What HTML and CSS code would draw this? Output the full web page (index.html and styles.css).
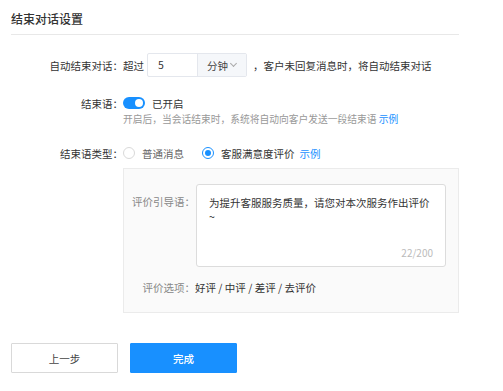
FILE: index.html
```html
<!DOCTYPE html>
<html lang="zh-CN">
<head>
    <meta charset="UTF-8">
    <meta name="viewport" content="width=device-width, initial-scale=1.0">
    <title>结束对话设置</title>
    <link rel="stylesheet" href="styles.css">
</head>
<body>
    <div class="page">
        <h3 class="page-title">结束对话设置</h3>

        <div class="form">
            <div class="form-row">
                <div class="form-label">自动结束对话：</div>
                <div class="form-field">
                    <span>超过</span>
                    <span class="input-group">
                        <span class="input-num">5</span>
                        <span class="input-unit">分钟<span class="chevron"></span></span>
                    </span>
                    <span>，客户未回复消息时，将自动结束对话</span>
                </div>
            </div>

            <div class="form-row row-switch">
                <div class="form-label">结束语：</div>
                <div class="form-field">
                    <span class="switch is-on"><span class="switch-knob"></span></span>
                    <span>已开启</span>
                </div>
            </div>
            <div class="form-hint">
                开启后，当会话结束时，系统将自动向客户发送一段结束语 <a class="link" href="#">示例</a>
            </div>

            <div class="form-row row-type">
                <div class="form-label">结束语类型：</div>
                <div class="form-field">
                    <label class="radio">
                        <span class="radio-dot"></span>
                        <span class="radio-text">普通消息</span>
                    </label>
                    <label class="radio is-checked">
                        <span class="radio-dot"></span>
                        <span class="radio-text">客服满意度评价</span>
                    </label>
                    <a class="link" href="#">示例</a>
                </div>
            </div>

            <div class="eval-box">
                <div class="eval-row">
                    <div class="eval-label">评价引导语：</div>
                    <div class="textarea">
                        <div class="textarea-text">为提升客服服务质量，请您对本次服务作出评价<br>~</div>
                        <div class="textarea-count">22/200</div>
                    </div>
                </div>
                <div class="eval-row eval-options">
                    <div class="eval-label">评价选项：</div>
                    <div class="eval-value">好评 / 中评 / 差评 / 去评价</div>
                </div>
            </div>
        </div>

        <div class="actions">
            <button class="btn">上一步</button>
            <button class="btn btn-primary">完成</button>
        </div>
    </div>
</body>
</html>
```

FILE: styles.css
```css
html,
body {
    margin: 0;
    padding: 0;
}

body {
    font: 10.5px "Noto Sans CJK SC", "Noto Sans", sans-serif;
    color: #333;
    background: #fff;
}

button {
    margin: 0;
    padding: 0;
    border: 0;
    background: none;
    font-family: inherit;
    color: inherit;
    cursor: pointer;
}

.page {
    width: 448px;
    padding: 0 11px;
}

.page-title {
    margin: 0;
    padding: 10px 0 7px;
    font-size: 12px;
    line-height: 17px;
    font-weight: 500;
    color: #333;
    border-bottom: 1px solid #e8e8e8;
}

/* form */
.form {
    padding-top: 18px;
}

.form-row {
    display: flex;
    align-items: center;
    height: 24px;
}

.form-label {
    width: 112px;
    text-align: right;
    color: #333;
    flex-shrink: 0;
}

.form-field {
    display: flex;
    align-items: center;
    white-space: nowrap;
}

.input-group {
    display: flex;
    height: 24px;
    margin: 0 6px 0 3px;
    border: 1px solid #e4e7ed;
    border-radius: 2px;
    box-sizing: border-box;
}

.input-num {
    width: 39px;
    padding-left: 10px;
    line-height: 22px;
    border-right: 1px solid #e4e7ed;
}

.input-unit {
    display: flex;
    align-items: center;
    width: 48px;
    padding-left: 9px;
    box-sizing: border-box;
    background: #f5f7fa;
    color: #444;
}

.chevron {
    width: 4px;
    height: 4px;
    margin: -3px 0 0 3px;
    border-right: 1px solid #aaa;
    border-bottom: 1px solid #aaa;
    transform: rotate(45deg);
}

.row-switch {
    margin-top: 14px;
}

.switch {
    position: relative;
    width: 22px;
    height: 12px;
    margin-right: 7px;
    border-radius: 6px;
    background: #1890ff;
}

.switch-knob {
    position: absolute;
    top: 2px;
    right: 2px;
    width: 8px;
    height: 8px;
    border-radius: 50%;
    background: #fff;
}

.form-hint {
    margin-top: -3px;
    padding-left: 112px;
    font-size: 9.75px;
    line-height: 14px;
    color: #999;
}

.link {
    color: #1890ff;
    text-decoration: none;
}

.row-type {
    margin-top: 15px;
}

.radio {
    display: flex;
    align-items: center;
    margin-right: 18px;
    color: #666;
}

.radio-dot {
    width: 12px;
    height: 12px;
    margin-right: 7px;
    border: 1px solid #d9d9d9;
    border-radius: 50%;
    box-sizing: border-box;
    display: flex;
    align-items: center;
    justify-content: center;
}

.radio.is-checked {
    margin-right: 5px;
    color: #333;
}

.radio.is-checked .radio-dot {
    border-color: #1890ff;
}

.radio.is-checked .radio-dot::after {
    content: "";
    width: 6px;
    height: 6px;
    border-radius: 50%;
    background: #1890ff;
}

/* evaluation panel */
.eval-box {
    margin: 3px 0 0 112px;
    padding: 15px 12px 17px 0;
    background: #fafafa;
    border: 1px solid #ebebeb;
}

.eval-row {
    display: flex;
}

.eval-label {
    width: 71px;
    text-align: right;
    line-height: 14px;
    padding-top: 11px;
    color: #888;
    flex-shrink: 0;
}

.textarea {
    flex: 1;
    height: 83px;
    margin-left: 1px;
    padding: 11px 12px 6px;
    box-sizing: border-box;
    background: #fff;
    border: 1px solid #dcdcdc;
    border-radius: 3px;
    display: flex;
    flex-direction: column;
    justify-content: space-between;
}

.textarea-text {
    line-height: 14px;
    color: #333;
}

.textarea-count {
    text-align: right;
    font-size: 10px;
    line-height: 14px;
    color: #bbb;
}

.eval-options {
    margin-top: 14px;
}

.eval-options .eval-label {
    padding-top: 0;
}

.eval-value {
    line-height: 14px;
    color: #333;
}

/* buttons */
.actions {
    display: flex;
    gap: 12px;
    margin-top: 30px;
}

.btn {
    width: 107px;
    height: 30px;
    font-size: 10.5px;
    border: 1px solid #d9d9d9;
    border-radius: 1px;
    background: #fff;
    color: #444;
}

.btn-primary {
    border-color: #1890ff;
    background: #1890ff;
    color: #fff;
    font-weight: 500;
}
```
